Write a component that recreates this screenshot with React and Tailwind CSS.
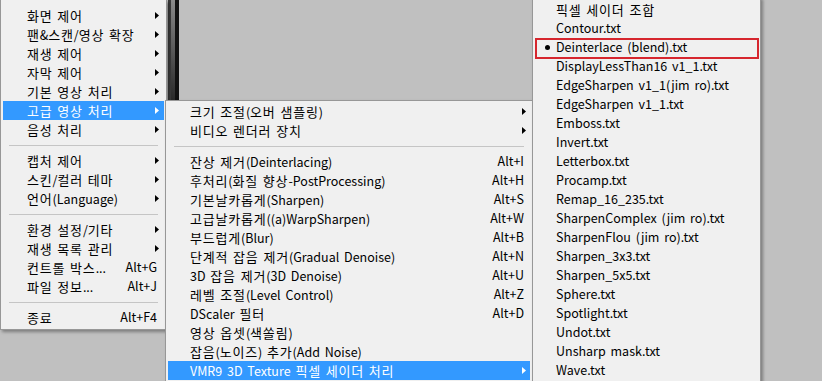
const font = { fontFamily: '"Noto Sans CJK KR", "Noto Sans", sans-serif' }

// Hangul runs are set a touch larger and looser, the way Malgun Gothic sits next to its Latin glyphs
function Label({ text }) {
  return text.split(/([가-힣]+)/).map((part, i) =>
    /[가-힣]/.test(part) ? (
      <span key={i} className="text-[13px] tracking-[0.8px]">{part}</span>
    ) : (
      <span key={i}>{part}</span>
    )
  )
}

function Arrow({ active }) {
  return (
    <svg width="4" height="7" viewBox="0 0 4 7" className="shrink-0">
      <path d="M0 0 L4 3.5 L0 7 Z" fill={active ? '#ffffff' : '#000000'} />
    </svg>
  )
}

function Row({ item, textPad, rightPad }) {
  if (item.sep) {
    return (
      <div className="h-[12px] flex items-center px-[6px]">
        <div className="w-full h-px bg-[#c5c5c5]" />
      </div>
    )
  }
  const active = item.active
  return (
    <div
      className={
        'h-[19px] flex items-center text-[12.5px] leading-none whitespace-nowrap [word-spacing:2px] ' +
        (active ? 'bg-[#3399ff] text-white' : 'text-black')
      }
      style={{ paddingLeft: textPad, paddingRight: rightPad }}
    >
      <span className="flex-1">
        <Label text={item.label} />
      </span>
      {item.key && <span className="mr-[2px]">{item.key}</span>}
      {item.sub && <Arrow active={active} />}
    </div>
  )
}

export default function App() {
  const main = [
    { label: '화면 제어', sub: true },
    { label: '팬&스캔/영상 확장', sub: true },
    { label: '재생 제어', sub: true },
    { label: '자막 제어', sub: true },
    { label: '기본 영상 처리', sub: true },
    { label: '고급 영상 처리', sub: true, active: true },
    { label: '음성 처리', sub: true },
    { sep: true },
    { label: '캡처 제어', sub: true },
    { label: '스킨/컬러 테마', sub: true },
    { label: '언어(Language)', sub: true },
    { sep: true },
    { label: '환경 설정/기타', sub: true },
    { label: '재생 목록 관리', sub: true },
    { label: '컨트롤 박스...', key: 'Alt+G' },
    { label: '파일 정보...', key: 'Alt+J' },
    { sep: true },
    { label: '종료', key: 'Alt+F4' },
  ]

  const video = [
    { label: '크기 조절(오버 샘플링)', sub: true },
    { label: '비디오 렌더러 장치', sub: true },
    { sep: true },
    { label: '잔상 제거(Deinterlacing)', key: 'Alt+I' },
    { label: '후처리(화질 향상-PostProcessing)', key: 'Alt+H' },
    { label: '기본날카롭게(Sharpen)', key: 'Alt+S' },
    { label: '고급날카롭게((a)WarpSharpen)', key: 'Alt+W' },
    { label: '부드럽게(Blur)', key: 'Alt+B' },
    { label: '단계적 잡음 제거(Gradual Denoise)', key: 'Alt+N' },
    { label: '3D 잡음 제거(3D Denoise)', key: 'Alt+U' },
    { label: '레벨 조절(Level Control)', key: 'Alt+Z' },
    { label: 'DScaler 필터', key: 'Alt+D' },
    { label: '영상 옵셋(색쏠림)' },
    { label: '잡음(노이즈) 추가(Add Noise)' },
    { label: 'VMR9 3D Texture 픽셀 세이더 처리', sub: true, active: true },
  ]

  const shaders = [
    '픽셀 세이더 조합',
    'Contour.txt',
    'Deinterlace (blend).txt',
    'DisplayLessThan16 v1_1.txt',
    'EdgeSharpen v1_1(jim ro).txt',
    'EdgeSharpen v1_1.txt',
    'Emboss.txt',
    'Invert.txt',
    'Letterbox.txt',
    'Procamp.txt',
    'Remap_16_235.txt',
    'SharpenComplex (jim ro).txt',
    'SharpenFlou (jim ro).txt',
    'Sharpen_3x3.txt',
    'Sharpen_5x5.txt',
    'Sphere.txt',
    'Spotlight.txt',
    'Undot.txt',
    'Unsharp mask.txt',
    'Wave.txt',
  ]

  return (
    <div className="relative w-[822px] h-[381px] overflow-hidden bg-[#c0c0c0]" style={font}>
      {/* player window edge behind the menus */}
      <div className="absolute left-[168px] top-0 w-[11px] h-[100px] flex">
        <div className="w-[3px] bg-[#3a3a3a]" />
        <div className="w-[4px] bg-gradient-to-b from-[#8a8a8a] via-[#5a5a5a] to-[#2a2a2a]" />
        <div className="w-[4px] bg-[#111]" />
      </div>
      <div className="absolute left-0 top-[250px] w-[2px] h-[78px] bg-black" />

      {/* main popup */}
      <div className="absolute left-0 top-0 w-[167px] bg-[#f0f0f0] border border-[#979797] border-t-0 pt-[6px] pb-[2px] px-[2px] shadow-[2px_2px_3px_rgba(0,0,0,0.35)]">
        {main.map((item, i) => (
          <Row key={i} item={item} textPad={24} rightPad={5} />
        ))}
      </div>

      {/* 고급 영상 처리 submenu */}
      <div className="absolute left-[165px] top-[100px] w-[368px] h-[300px] bg-[#f0f0f0] border border-[#979797] pt-[1px] px-[2px] shadow-[2px_2px_3px_rgba(0,0,0,0.35)]">
        {video.map((item, i) => (
          <Row key={i} item={item} textPad={22} rightPad={4} />
        ))}
      </div>

      {/* pixel shader submenu */}
      <div className="absolute left-[532px] top-[-3px] w-[229px] h-[400px] bg-[#f0f0f0] border border-[#979797] pt-[2px] px-[2px] shadow-[2px_2px_3px_rgba(0,0,0,0.35)]">
        {shaders.map((label, i) => (
          <div key={i} className="h-[19px] flex items-center text-[12.5px] leading-none text-black whitespace-nowrap [word-spacing:2px]">
            <span className="w-[21px] flex justify-center">
              {i === 2 && <span className="w-[5px] h-[5px] rounded-full bg-black ml-[3px]" />}
            </span>
            <span>
              <Label text={label} />
            </span>
          </div>
        ))}
      </div>

      {/* red highlight box */}
      <div className="absolute left-[535px] top-[38px] w-[224px] h-[21px] border-2 border-[#d6262e]" />
    </div>
  )
}
